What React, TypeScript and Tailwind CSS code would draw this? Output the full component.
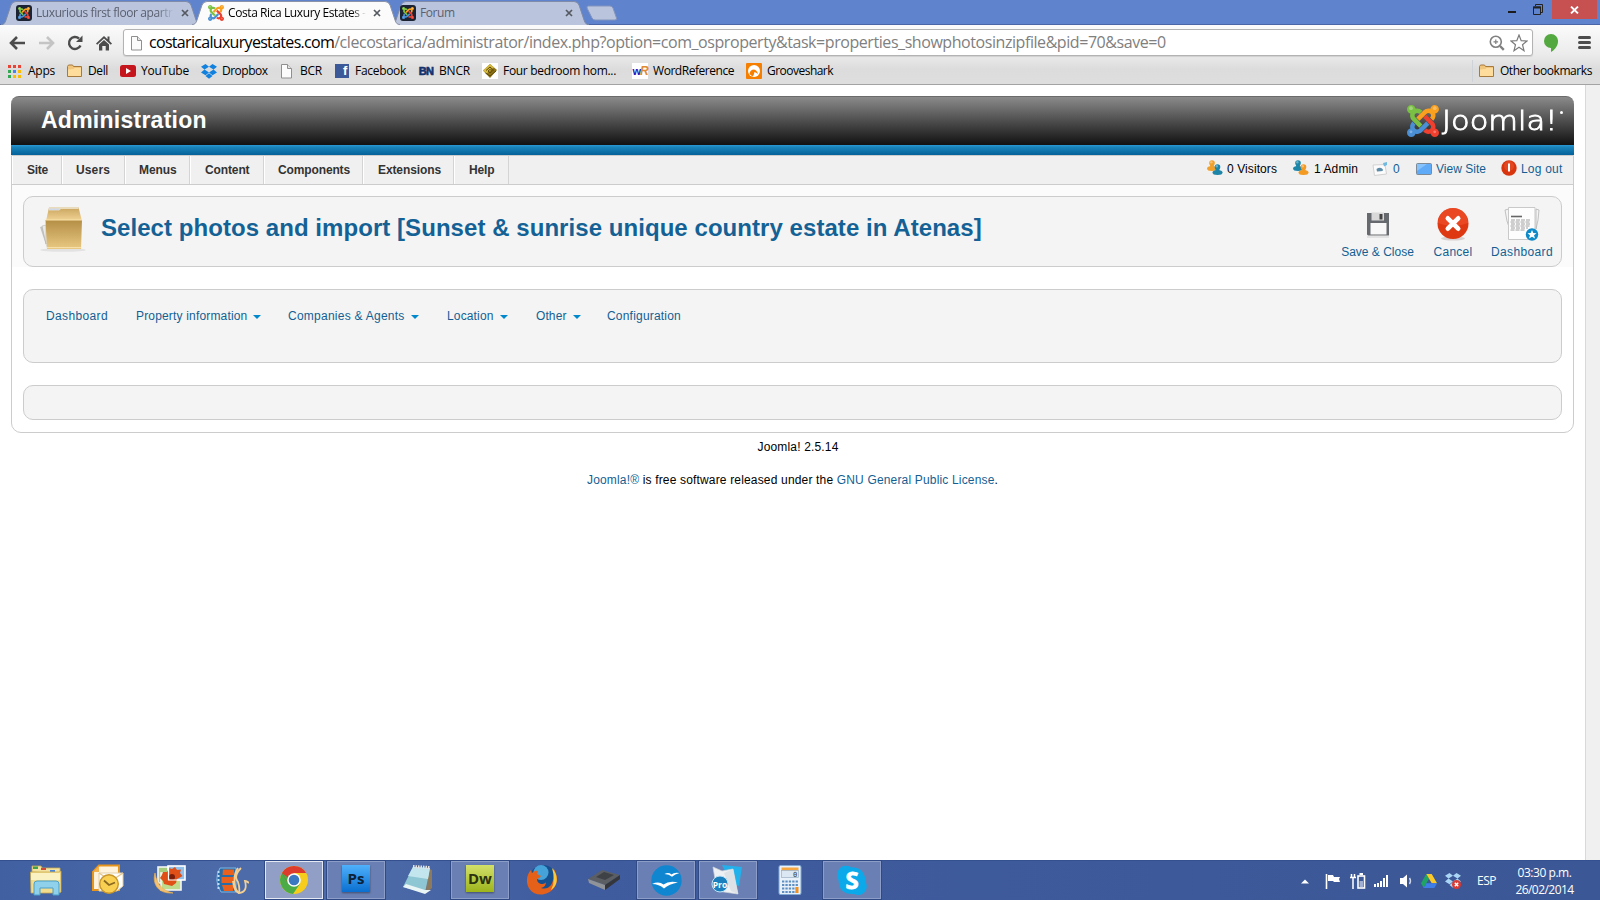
import type { ReactNode } from "react";

type P = { className?: string };

const SVG = "block shrink-0";

/* ---------- Joomla mark ---------- */
function JoomlaMark({ className = "" }: P) {
  return (
    <svg viewBox="0 32 448 448" className={`${SVG} ${className}`}>
      <path fill="#7ac143" d="M.6 92.1C.6 58.8 27.4 32 60.4 32c30 0 54.5 21.9 59.2 50.2 32.6-7.6 67.1.6 96.5 30l-44.3 44.3c-20.5-20.5-42.6-16.3-55.4-3.5-14.3 14.3-14.3 37.9 0 52.2l99.5 99.5-44 44.3c-87.7-87.2-49.7-49.7-99.8-99.7-26.8-26.5-35-64.8-24.8-98.9C20.4 144.6.6 120.7.6 92.1z" />
      <path fill="#f9a01f" d="M130.1 208.5l44.3 44.3c10-10 89.7-89.7 99.7-99.8 14.3-14.3 37.6-14.3 51.9 0 12.8 12.8 17 35-3.5 55.4l44 44.3c31.2-31.2 38.5-67.6 28.9-101.2 29.2-4.1 51.9-29.2 51.9-59.5 0-33.2-26.8-60.1-59.8-60.1-30.3 0-55.4 22.5-59.5 51.6-33.8-9.9-71.7-1.5-98.3 25.1-18.3 19.1-71.1 71.5-99.6 99.9z" />
      <path fill="#ef3f2e" d="M396.4 360.7c8.2-32.7-.9-68.5-26.3-93.9-11.8-12.2 5 4.7-99.5-99.7l-44.3 44.3 99.7 99.7c14.3 14.3 14.3 37.6 0 51.9-12.8 12.8-35 17-55.4-3.5l-44 44.3c27.6 30.2 68 38.8 102.7 28 5.5 27.4 29.7 48.1 58.9 48.1 33 0 59.8-26.8 59.8-60.1 0-30.2-22.5-55-51.6-59.1z" />
      <path fill="#4a8fd3" d="M312.1 307.6l-44-44.3c-87 86.4-50.4 50.4-99.7 99.8-14.3 14.3-37.6 14.3-51.9 0-13.1-13.4-16.9-35.3 3.2-55.4l-44-44.3c-30.2 30.2-38 65.2-29.5 98.3-26.7 6-46.2 29.9-46.2 58.2C0 453.2 26.8 480 59.8 480c28.6 0 52.5-19.8 58.6-46.7 32.7 8.2 68.5-.6 94.2-26 32.1-32 12.2-12.4 99.5-99.7z" />
      <g fill="#fff" opacity=".3">
        <circle cx="56" cy="76" r="26" /><circle cx="388" cy="76" r="26" /><circle cx="388" cy="408" r="20" /><circle cx="56" cy="408" r="20" />
      </g>
    </svg>
  );
}

function JoomlaTile() {
  return (
    <span className="flex size-4 shrink-0 items-center justify-center rounded-[3px] bg-[#1c2433]">
      <JoomlaMark className="size-[12px]" />
    </span>
  );
}

/* ---------- Tabs ---------- */
function TabShape({ w, fill, line }: { w: number; fill: string; line: string }) {
  return (
    <svg width={w} height="25" className="absolute inset-0">
      <path d={`M0 25C3 24.500 4 23 5 20L10 5Q11.500 1.500 15 1.500H${w - 15}Q${w - 11.500} 1.500 ${w - 10} 5L${w - 5} 20C${w - 4} 23 ${w - 3} 24.500 ${w} 25Z`} fill={fill} />
      <path d={`M0 24.500C3 24.500 4 23 5 20L10 5Q11.500 1.500 15 1.500H${w - 15}Q${w - 11.500} 1.500 ${w - 10} 5L${w - 5} 20C${w - 4} 23 ${w - 3} 24.500 ${w} 24.500`} fill="none" stroke={line} />
    </svg>
  );
}

function Cross({ className = "" }: P) {
  return (
    <svg viewBox="0 0 8 8" className={`${SVG} ${className}`}>
      <path d="M1 1L7 7M7 1L1 7" stroke="#555960" strokeWidth="1.7" />
    </svg>
  );
}

function TabStrip() {
  return (
    <div className="flex h-[25px] bg-[#5f83cd] text-[12px] leading-[24px] shadow-[inset_0_-1px_0_#4a66a6]">
      <div className="relative ml-px h-[25px] w-[200px]">
        <TabShape w={200} fill="#bac5dd" line="#7f8ba8" />
        <div className="relative flex h-full items-center pl-[15px]">
          <JoomlaTile />
          <span className="ml-1 w-[138px] overflow-hidden whitespace-nowrap tracking-[-0.41px] text-[#5b6070] [mask-image:linear-gradient(90deg,#000_88%,transparent)]">Luxurious first floor apartr</span>
          <Cross className="ml-[7px] mt-px size-2" />
        </div>
      </div>
      <div className="relative z-10 -ml-[9px] h-[25px] w-[208px]">
        <TabShape w={208} fill="#fbfbfb" line="#8a93a8" />
        <div className="relative flex h-full items-center pl-4">
          <JoomlaMark className="size-4" />
          <span className="ml-1 w-[141px] overflow-hidden whitespace-nowrap tracking-[-0.41px] text-black [mask-image:linear-gradient(90deg,#000_88%,transparent_98%)]">Costa Rica Luxury Estates -</span>
          <Cross className="ml-1 mt-px size-2" />
        </div>
      </div>
      <div className="relative -ml-[9px] h-[25px] w-[198px]">
        <TabShape w={198} fill="#bac5dd" line="#7f8ba8" />
        <div className="relative flex h-full items-center pl-[9px]">
          <JoomlaTile />
          <span className="ml-1 w-[141px] tracking-[-0.45px] text-[#5b6070]">Forum</span>
          <Cross className="ml-1 mt-px size-2" />
        </div>
      </div>
      <svg width="33" height="16" className="ml-[-4px] mt-[5px] block">
        <path d="M3.500 1H25Q27 1 28 3L31.500 13Q32 15 30 15H10Q8 15 7 13L2 3Q1.500 1 3.500 1Z" fill="#bac5dd" stroke="#8494bd" />
      </svg>
      <div className="ml-auto flex h-[25px] items-start">
        <div className="mr-[17px] mt-[11px] h-[2px] w-2 bg-[#1c1c1c]" />
        <svg width="10" height="11" className="mr-[9px] mt-1 block">
          <path d="M2.500 2V.5H9.500V8.500H8" fill="none" stroke="#222" /><path d="M.5 3H7.500V10.500H.5Z" fill="none" stroke="#222" /><path d="M0 3.500H8" stroke="#222" strokeWidth="2" />
        </svg>
        <div className="mr-[3px] flex h-[19px] w-[45px] items-center justify-center bg-[#c75050]">
          <svg width="9" height="8" viewBox="0 0 9 8"><path d="M1 .5L8 7.500M8 .5L1 7.500" stroke="#fff" strokeWidth="1.800" /></svg>
        </div>
      </div>
    </div>
  );
}

/* ---------- Toolbar ---------- */
function PageIcon() {
  return (
    <svg width="16" height="16" viewBox="0 0 16 16" className={SVG}>
      <path d="M2.500 1.500H8.500L12.500 5.500V15H2.500Z" fill="#fbfbfb" stroke="#8f8f8f" /><path d="M8.500 1.500V5.500H12.500" fill="#e4e4e4" stroke="#8f8f8f" />
    </svg>
  );
}

function FolderIcon() {
  return (
    <svg width="16" height="14" viewBox="0 0 16 14" className={SVG}>
      <path d="M.5 12.500V2.500L1.500 1H5.500L6.500 2.500H14.500V12.500Z" fill="#f2c57c" stroke="#a67a3c" />
      <path d="M1 12V5.500L6.500 5L7.500 4H14V12Z" fill="#fddc9c" />
    </svg>
  );
}

function AddressRow() {
  return (
    <div className="flex h-[34px] items-center pt-px">
      <svg width="16" height="14" viewBox="0 0 16 14" className="ml-[9px] block"><path d="M8 1L2 7L8 13M2 7H16" fill="none" stroke="#4c4c4c" strokeWidth="2.600" /></svg>
      <svg width="16" height="14" viewBox="0 0 16 14" className="ml-[14px] block"><path d="M8 1L14 7L8 13M14 7H0" fill="none" stroke="#c4c4c4" strokeWidth="2.600" /></svg>
      <svg width="16" height="16" viewBox="0 0 16 16" className="ml-[12px] block"><path d="M13.500 10.500A6 6 0 1 1 12 3.500" fill="none" stroke="#4c4c4c" strokeWidth="2.400" /><path d="M15.500 .5V7H9Z" fill="#4c4c4c" /></svg>
      <svg width="16" height="16" viewBox="0 0 16 16" className="ml-[13px] block"><path d="M8 1L0 8.500L1.200 9.700L8 3.500L14.800 9.700L16 8.500L13.500 6V1.500H11.500V4.200Z" fill="#4c4c4c" /><path d="M3 9.500L8 5L13 9.500V15.500H9.700V11H6.300V15.500H3Z" fill="#4c4c4c" /></svg>
      <div className="ml-[11px] flex h-[27px] w-[1410px] items-center rounded-[3px] border border-[#b3b3b3] bg-white shadow-[0_1px_1px_#d0d0d0]">
        <span className="ml-[5px]"><PageIcon /></span>
        <span className="mb-px ml-1 whitespace-nowrap text-[16px] leading-[24px] tracking-[-0.69px] text-black">costaricaluxuryestates.com</span>
        <span className="mb-px whitespace-nowrap text-[16px] leading-[24px] tracking-[-0.435px] text-[#808080]">/clecostarica/administrator/index.php?option=com_osproperty&amp;task=properties_showphotosinzipfile&amp;pid=70&amp;save=0</span>
        <svg width="16" height="16" viewBox="0 0 16 16" className="ml-auto block"><circle cx="6.800" cy="6.800" r="5.500" fill="#fff" stroke="#808080" strokeWidth="1.600" /><path d="M6.800 4.500V9.100M4.500 6.800H9.100" stroke="#808080" strokeWidth="1.200" /><path d="M11 11L14.800 14.800" stroke="#808080" strokeWidth="2.400" /></svg>
        <svg width="18" height="18" viewBox="0 0 18 18" className="ml-[5px] mr-1 block"><path d="M9 1L11.200 6.600L17 7L12.500 10.700L14 16.700L9 13.300L4 16.700L5.500 10.700L1 7L6.800 6.600Z" fill="#fff" stroke="#7b7b7b" strokeWidth="1.200" /></svg>
      </div>
      <svg width="14" height="18" viewBox="0 0 14 18" className="ml-[11px] block"><path d="M7 0A7 7 0 0 1 14 7.500C14 12 10.500 16 7 18V14A7 7 0 0 1 7 0Z" fill="#53a93f" /></svg>
      <div className="ml-5 flex flex-col gap-[2px]">
        <div className="h-[3px] w-[13px] rounded-full bg-[#4c4c4c]" /><div className="h-[3px] w-[13px] rounded-full bg-[#4c4c4c]" /><div className="h-[3px] w-[13px] rounded-full bg-[#4c4c4c]" />
      </div>
    </div>
  );
}

const appColors = ["#ea4335", "#ea4335", "#ea4335", "#34a853", "#4285f4", "#fbbc05", "#34a853", "#fbbc05", "#fbbc05"];

function Bookmark({ icon, className, children }: { icon: ReactNode; className: string; children: ReactNode }) {
  return (
    <div className={`flex shrink-0 items-center whitespace-nowrap ${className}`}>
      <span className="mr-[5px] flex w-4 shrink-0 justify-center">{icon}</span>
      <span className="mb-px">{children}</span>
    </div>
  );
}

function BookmarksBar() {
  return (
    <div className="flex h-[24px] items-center pl-[7px] text-[12px] leading-[20px] text-black">
      <Bookmark className="w-[60px] tracking-[-0.25px]" icon={<div className="mr-px grid grid-cols-3 gap-[2px]">{appColors.map((c, i) => <i key={i} className="size-[3px]" style={{ background: c }} />)}</div>}>Apps</Bookmark>
      <Bookmark className="w-[53px] tracking-[-0.38px]" icon={<FolderIcon />}>Dell</Bookmark>
      <Bookmark className="w-[81px] tracking-[-0.19px]" icon={<svg width="16" height="12" viewBox="0 0 16 12"><rect width="16" height="12" rx="2.500" fill="#c4161c" /><path d="M6 3L11 6L6 9Z" fill="#fff" /></svg>}>YouTube</Bookmark>
      <Bookmark className="w-[78px] tracking-[-0.5px]" icon={<svg width="16" height="15" viewBox="0 0 16 15"><path d="M4.500 0L8 2.800L3.500 5.600L0 2.800ZM11.500 0L16 2.800L12.500 5.600L8 2.800ZM0 8.400L3.500 5.600L8 8.400L4.500 11.200ZM12.500 5.600L16 8.400L11.500 11.200L8 8.400ZM4.500 12L8 9.300L11.500 12L8 14.800Z" fill="#1081de" /></svg>}>Dropbox</Bookmark>
      <Bookmark className="w-[55px] tracking-[-0.24px]" icon={<PageIcon />}>BCR</Bookmark>
      <Bookmark className="w-[84px] tracking-[-0.3px]" icon={<span className="flex h-[14px] w-[14px] items-center justify-end bg-[#3b5998] pr-[2px] font-['Liberation_Sans',sans-serif] text-[13px] font-bold leading-[14px] text-white">f</span>}>Facebook</Bookmark>
      <Bookmark className="w-[64px] tracking-[-0.19px]" icon={<span className="font-['Liberation_Sans',sans-serif] text-[11px] font-bold tracking-[-0.6px] text-[#12326e] [-webkit-text-stroke:0.6px_#12326e]">BN</span>}>BNCR</Bookmark>
      <Bookmark className="w-[150px] tracking-[-0.31px]" icon={<svg width="16" height="16" viewBox="0 0 16 16"><rect width="16" height="16" fill="#fff" /><path d="M1 7.500L8 1L15 7L8 15Z" fill="#8f7417" /><path d="M1 7.500L8 1L12 4.500L4.500 10.500Z" fill="#d6bb45" /><path d="M4 7.500L8 4L12 7.500M3.500 10L8 13L14 8M6 8L8.500 6L10.500 8L8 10Z" fill="none" stroke="#5f4a08" /></svg>}>Four bedroom hom...</Bookmark>
      <Bookmark className="w-[114px] tracking-[-0.45px]" icon={<span className="flex size-4 items-center justify-center bg-white font-['Liberation_Sans',sans-serif] text-[11px] font-bold leading-none tracking-[-1px] text-[#1717c4]">w<i className="text-[12px] text-[#e08a33]">R</i></span>}>WordReference</Bookmark>
      <Bookmark className="w-[95px] tracking-[-0.52px]" icon={<svg width="16" height="16" viewBox="0 0 16 16"><rect width="16" height="16" rx="1" fill="#f77f00" /><circle cx="8" cy="8" r="6" fill="#fff" /><path d="M3.500 11Q4 6.500 8 6.500Q11 7 12 11Q10 9.500 8.500 9Q8 12 6.500 13.500Z" fill="#f77f00" /></svg>}>Grooveshark</Bookmark>
      <div className="ml-auto flex h-[22px] items-center border-l border-[#cdd3d8] pl-[6px] pr-2">
        <Bookmark className="tracking-[-0.43px]" icon={<FolderIcon />}>Other bookmarks</Bookmark>
      </div>
    </div>
  );
}

/* ---------- Joomla administrator ---------- */
function Person({ color, x, y }: { color: string; x: number; y: number }) {
  return (
    <g transform={`translate(${x} ${y})`}>
      <ellipse cx="5" cy="8.500" rx="5" ry="2.500" fill={color} />
      <path d="M3 4H7L6.800 9H3.200Z" fill={color} />
      <circle cx="5" cy="3" r="2.800" fill={color} />
      <circle cx="4.300" cy="2.200" r="1.200" fill="#fff" opacity=".35" />
    </g>
  );
}

function Visitors() {
  return (
    <svg width="16" height="16" viewBox="0 0 16 16" className={SVG}>
      <Person color="#f0a02c" x={0} y={0} />
      <Person color="#1d86a8" x={5.5} y={4} />
    </svg>
  );
}

function Admins() {
  return (
    <svg width="16" height="16" viewBox="0 0 16 16" className={SVG}>
      <Person color="#1d86a8" x={0} y={0} />
      <Person color="#f39a22" x={5.5} y={4} />
    </svg>
  );
}

const menu: [string, string][] = [
  ["Site", "w-[50px] pl-[14px] tracking-[-0.25px]"],
  ["Users", "w-[63px] pl-[13px] tracking-[0.13px]"],
  ["Menus", "w-[65px] pl-[13px] tracking-[-0.1px]"],
  ["Content", "w-[74px] pl-[14px] tracking-[-0.12px]"],
  ["Components", "w-[99px] pl-[13px] tracking-[-0.13px]"],
  ["Extensions", "w-[91px] pl-[14px] tracking-[-0.1px]"],
  ["Help", "w-[55px] pl-[14px] tracking-[-0.13px]"],
];

const sub: [string, string, boolean][] = [
  ["Dashboard", "w-[90px] tracking-[0.36px]", false],
  ["Property information", "w-[152px] tracking-[0.17px]", true],
  ["Companies & Agents", "w-[159px] tracking-[0.25px]", true],
  ["Location", "w-[89px] tracking-[0.15px]", true],
  ["Other", "w-[71px] tracking-[0.1px]", true],
  ["Configuration", "w-[90px] tracking-[0.2px]", false],
];

function FolderBox() {
  return (
    <svg width="50" height="48" viewBox="0 0 50 48" className={SVG}>
      <defs>
        <linearGradient id="fb" x1="0" y1="0" x2="0" y2="1"><stop offset="0" stopColor="#b48e45" /><stop offset="1" stopColor="#e9c983" /></linearGradient>
        <linearGradient id="ft" x1="0" y1="0" x2="0" y2="1"><stop offset="0" stopColor="#c9a45f" /><stop offset="1" stopColor="#f3d596" /></linearGradient>
      </defs>
      <ellipse cx="24" cy="44" rx="23" ry="1.800" fill="#e2e2e2" />
      <path d="M1 21L5 20L8 42Z" fill="#c4c4c4" /><path d="M3 20L7 19V38Z" fill="#e9e9e9" stroke="#aaa" strokeWidth=".5" />
      <path d="M10 1.500H39.500L43 15H7Z" fill="url(#ft)" /><path d="M10 1H39.500V3H22L20 4.500H10Z" fill="#e8dcbc" /><rect x="11" y="2.500" width="9" height="1.600" fill="#cfd8e8" />
      <path d="M6.500 14H43L42 43H8Z" fill="url(#fb)" /><path d="M6.500 14H43" stroke="#fbe3ab" /><path d="M8 41.500H42" stroke="#f6dfa8" />
    </svg>
  );
}

function AdminPage() {
  return (
    <div className="mx-[11px] mt-[11px] w-[1563px] shrink-0 font-['Liberation_Sans',sans-serif] text-[12px] text-black">
      <header className="flex h-[49px] items-center justify-between rounded-t-[8px] border-t border-[#6b6b6b] bg-[linear-gradient(#8a8a8a,#6c6c6c_25%,#111)] pl-[30px] pr-[11px]">
        <h1 className="mb-[2px] text-[23px] font-bold leading-[30px] tracking-[0.25px] text-white">Administration</h1>
        <div className="flex items-center">
          <JoomlaMark className="h-8 w-8" />
          <span className="ml-[3px] flex w-[118px] items-center">
            <span className="origin-left scale-x-[1.13] whitespace-nowrap font-['DejaVu_Sans',sans-serif] text-[27px] font-extralight leading-[30px] text-white [-webkit-text-stroke:0.9px_#fff]">Joomla!</span>
          </span>
          <span className="mb-[18px] size-[3px] rounded-full bg-white" />
        </div>
      </header>
      <div className="h-[10px] bg-[linear-gradient(#2a9ad6,#1a84bb_20%,#036299)]" />
      <div className="h-[278px] rounded-b-[10px] border border-[#ccc] bg-white">
        <div className="flex h-[29px] items-center border-b border-[#ccc] bg-[#f0f0f0]">
          <nav className="flex h-full font-bold text-[#333]">
            {menu.map(([t, c]) => (
              <div key={t} className={`flex h-full items-center whitespace-nowrap border-l border-l-white border-r border-r-[#d4d4d4] ${c}`}>{t}</div>
            ))}
          </nav>
          <div className="ml-auto flex h-full items-center whitespace-nowrap pb-[2px] pr-[9px]">
            <span className="mb-[2px]"><Visitors /></span><span className="ml-1 w-[66px] tracking-[0.09px]">0 Visitors</span>
            <span className="mb-[2px]"><Admins /></span><span className="ml-[5px] w-[58px] tracking-[0.09px]">1 Admin</span>
            <svg width="16" height="16" viewBox="0 0 16 16" className={SVG}><path d="M1 4L13 3.500L14.500 13L2.500 14.500Z" fill="#fbfbfb" stroke="#d2d2d2" /><path d="M4.500 8Q8 5.500 10.500 8T5 10.500Z" fill="#5d8ca8" /><path d="M11 2L15 1V4L12 5.500Z" fill="#6fb8e0" /></svg>
            <span className="ml-[5px] w-[23px] text-[#135f93]">0</span>
            <svg width="16" height="12" viewBox="0 0 16 12" className={SVG}><rect x=".5" y=".5" width="15" height="11" rx="1" fill="#5fabf8" stroke="#7d8a98" /><path d="M1 8L11 1H1Z" fill="#86c2fb" /></svg>
            <span className="ml-[4px] w-[65px] tracking-[0.02px] text-[#135f93]">View Site</span>
            <svg width="16" height="16" viewBox="0 0 16 16" className="mb-[2px] block shrink-0"><circle cx="8" cy="8" r="7.700" fill="#d8350f" /><circle cx="8" cy="6" r="5" fill="#ee5a34" opacity=".5" /><rect x="7" y="3.500" width="2" height="8" fill="#fff" /></svg>
            <span className="ml-1 w-[43px] tracking-[0.2px] text-[#135f93]">Log out</span>
          </div>
        </div>
        <div className="h-[82px] bg-[#fbfbfb] px-[11px] pt-[11px]">
          <section className="flex h-[71px] items-start rounded-[10px] border border-[#ccc] bg-[#f4f4f4]">
            <div className="ml-[15px] mt-[9px]"><FolderBox /></div>
            <h2 className="ml-[12px] mt-[16px] whitespace-nowrap text-[24px] font-bold leading-[30px] tracking-[0.055px] text-[#146295]">Select photos and import [Sunset &amp; sunrise unique country estate in Atenas]</h2>
            <div className="ml-auto mr-[7px] mt-[10px] flex leading-[16px] text-[#135f93]">
              <div className="flex w-[73px] flex-col items-center whitespace-nowrap">
                <svg width="32" height="32" viewBox="0 0 32 32"><path d="M5 6H27V28.500H6L5 27.500Z" fill="#666a6e" /><path d="M9.500 5.500H22V13.500H9.500Z" fill="#d9d9d9" /><path d="M17.500 7H20.500V12.500H17.500Z" fill="#444" /><path d="M8.500 16H24.500V27.500H8.500Z" fill="#f8f8f8" /><path d="M5 30H27" stroke="#ccc" strokeWidth="1.500" opacity=".6" /></svg>
                <span className="mt-[5px]">Save &amp; Close</span>
              </div>
              <div className="ml-[19px] flex w-[40px] flex-col items-center whitespace-nowrap">
                <svg width="34" height="34" viewBox="0 0 34 34" className="-mb-[2px]"><ellipse cx="17" cy="31.500" rx="12" ry="2" fill="#d8d0d0" /><circle cx="17" cy="16.500" r="15.500" fill="#de3812" /><path d="M2 16A15 15 0 0 1 32 16Q17 22 2 16Z" fill="#f0532e" opacity=".6" /><path d="M11.800 11.300L22.200 21.700M22.200 11.300L11.800 21.700" stroke="#fff" strokeWidth="4.600" strokeLinecap="round" /></svg>
                <span className="mt-[5px] tracking-[0.27px]">Cancel</span>
              </div>
              <div className="ml-[17px] flex w-[64px] flex-col items-center whitespace-nowrap">
                <svg width="38" height="34" viewBox="0 0 38 34" className="-mb-[2px]"><path d="M2 3L6 2V20L4 14ZM36 3L33 2V22L35 13Z" fill="#f4f4f4" stroke="#aaa" strokeWidth=".7" /><path d="M5.500 .5H32V32.500H5.500Z" fill="#fdfdfd" stroke="#c9c9c9" /><path d="M8 9.500H19" stroke="#666" strokeWidth="1.600" /><path d="M8 13H28M7.500 15H27M8 17H28M7.500 19H27M8 21H25M7.500 23H22" stroke="#a0a0a0" strokeWidth="1" strokeDasharray="4 1" /><circle cx="29" cy="27.500" r="6.200" fill="#0e8ac8" /><path d="M29 23L30.300 26L33.500 26.200L31 28.300L32 31.500L29 29.700L26 31.500L27 28.300L24.500 26.200L27.700 26Z" fill="#fff" /></svg>
                <span className="mt-[5px] tracking-[0.36px]">Dashboard</span>
              </div>
            </div>
          </section>
        </div>
        <section className="mx-[11px] mt-[22px] flex h-[74px] items-start rounded-[10px] border border-[#ccc] bg-[#f4f4f4] pl-[22px] pt-[17px] leading-[18px] text-[#135f93]">
          {sub.map(([t, c, caret]) => (
            <div key={t} className={`flex items-center whitespace-nowrap ${c}`}>
              {t}
              {caret && <span className="ml-[6px] mt-px border-x-4 border-t-4 border-x-transparent border-t-[#0088cc]" />}
            </div>
          ))}
        </section>
        <section className="mx-[11px] mt-[22px] h-[35px] rounded-[10px] border border-[#ccc] bg-[#f4f4f4]" />
      </div>
      <footer className="w-[1563px] text-center">
        <p className="mt-[5px] pl-[11px] leading-[18px] tracking-[0.16px]">Joomla! 2.5.14</p>
        <p className="mt-[15px] leading-[18px] tracking-[0.166px]"><a className="text-[#135f93]">Joomla!®</a> is free software released under the <a className="text-[#135f93]">GNU General Public License</a>.</p>
      </footer>
    </div>
  );
}

/* ---------- Taskbar ---------- */
function Explorer() {
  return (
    <svg width="34" height="32" viewBox="0 0 34 32"><path d="M3 8V2H12L13 4H31V10Z" fill="#f3e3a0" stroke="#c9a94e" strokeWidth=".8" /><path d="M4 2.500H9V5H4Z" fill="#3fa24a" /><path d="M12 4H17V6H12Z" fill="#d04a3a" /><path d="M21 6H26V8H21Z" fill="#4c86d8" /><path d="M1.500 8H30L32 7V28L30 29H2Z" fill="#f2dd8e" stroke="#c9a94e" strokeWidth=".8" /><path d="M2 9H31V16H2Z" fill="#fbf2c4" /><path d="M5 31V20Q5 17 8 17H27Q30 17 30 20V31H24V24H11V31Z" fill="#8fd0ea" stroke="#4ba0cb" /></svg>
  );
}
function Outlook() {
  return (
    <svg width="34" height="32" viewBox="0 0 34 32"><path d="M2 26V8L8 1.500H28V26Z" fill="#fff3dc" stroke="#e8951c" strokeWidth="2" /><path d="M8 2V8H2Z" fill="#f4b24c" /><path d="M8 9H32V22L26 27H8Z" fill="#fff" stroke="#e0cfa8" /><path d="M8 9L20 17L32 9" fill="none" stroke="#e3c48a" strokeWidth="1.200" /><circle cx="18" cy="20" r="9.300" fill="#f9d052" stroke="#c9962a" strokeWidth="1.400" /><path d="M13 16.500L18 21L24 18.500" fill="none" stroke="#8a6a22" strokeWidth="1.800" /></svg>
  );
}
function Photos() {
  return (
    <svg width="34" height="32" viewBox="0 0 34 32"><rect x="5" y="3" width="17" height="16" fill="#a5cd7e" stroke="#f4f4f4" strokeWidth="1.600" /><rect x="8" y="9" width="20" height="17" fill="#bfdc8e" stroke="#f4f4f4" strokeWidth="1.600" /><rect x="15" y="2" width="17" height="14" fill="#8fc1ec" stroke="#fff" strokeWidth="1.600" /><path d="M16 4L19 5L22 3L24 6L28 5.500L27 9L29.500 12L26 14L24 15L23 19L19 22L15 21L11 20L10 17L7 14L9 11L10 8L14 8Z" fill="#df4f16" /><circle cx="19" cy="13" r="3" fill="#7c1d08" /><path d="M15.500 3V16H24" fill="none" stroke="#fff" strokeWidth="1.200" /><path d="M2 9C-1 20 5 30 20 29C11 27 4 22 2 9Z" fill="#f5c273" stroke="#e9b04e" strokeWidth=".7" /></svg>
  );
}
function Movie() {
  return (
    <svg width="34" height="32" viewBox="0 0 34 32"><path d="M5 4H21V28H6Q-2 16 5 4Z" fill="#2a6ca8" stroke="#7fb6e2" /><path d="M8 5.500H19V11H7.500ZM6.500 13H18V19H6.500ZM7 21H18V27H9Z" fill="#e9611c" /><path d="M3.500 7V26" stroke="#bfe0f7" strokeWidth="2" strokeDasharray="2 2" /><path d="M23 4C17 12 19 28 25 29Q19 29 18 17M26 4Q18 12 23 18Q25 24 24 29Q33 28 30 17Q32 17 34 19" fill="none" stroke="#f3cf93" strokeWidth="1.800" /></svg>
  );
}
function Chrome() {
  return (
    <svg width="30" height="30" viewBox="0 0 30 30"><circle cx="15" cy="15" r="14" fill="#f7cd1d" /><path d="M2.900 8A14 14 0 0 0 14 29L21.200 18.500L15 15V8Z" fill="#4aab47" /><path d="M2.900 8A14 14 0 0 1 27.200 8H15L9 12L9 18.500Z" fill="#dd3b2c" /><path d="M2.900 8L9.500 19L11 14Z" fill="#4aab47" /><circle cx="15" cy="15" r="6.800" fill="#fff" /><circle cx="15" cy="15" r="5.300" fill="#3a78c2" /></svg>
  );
}
function Notepad() {
  return (
    <svg width="34" height="32" viewBox="0 0 34 32"><path d="M26 4L31 6L31 24L25 29Z" fill="#8d7a5c" /><path d="M12 3L29 4L24 29L2 23Z" fill="#8fc6d4" /><path d="M12 3L29 4L27 15L7 12Z" fill="#c3e6ee" /><path d="M2 23L5 20L24 26L30 26L24 30Z" fill="#e9f4f5" /><path d="M12 2.500L29 3.500" stroke="#e5e5e5" strokeWidth="3" strokeDasharray="1.500 1" /></svg>
  );
}
function Firefox() {
  return (
    <svg width="32" height="32" viewBox="0 0 32 32"><circle cx="17" cy="14.500" r="13.500" fill="#16508f" /><circle cx="15" cy="8.500" r="7.500" fill="#4fb2e6" opacity=".85" /><path d="M27 4C31 9 33 17 28 24C22 32 9 33 3.500 25C-1 18 1 10 5 6L6 9Q9 6 12 7L11 10L15 12Q14 14 11 15Q11 19 15 20Q19 20 20 18Q20 23 15 24Q21 26 25 21Q29 15 27 4Z" fill="#e5611a" /><path d="M26 4C33 11 32 22 25 26Q30 17 26 4Z" fill="#f9cb3c" /></svg>
  );
}
function Scanner() {
  return (
    <svg width="34" height="24" viewBox="0 0 34 24"><path d="M1 11L15 2L33 7L18 17Z" fill="#5b5e63" /><path d="M9 9L17 4L27 7L18 12Z" fill="#3e4145" /><path d="M1 11L18 17V22L2 15Z" fill="#909398" /><path d="M18 17L33 7V11L18 22Z" fill="#34363a" /></svg>
  );
}
function OpenOffice() {
  return (
    <svg width="31" height="31" viewBox="0 0 31 31"><circle cx="15.500" cy="15.500" r="15.200" fill="#1186d0" /><path d="M13.500 9Q17.500 7 20.500 9.500Q23 7 28.500 8Q24 9 21 11.800Q18 9 13.500 9ZM1 19Q8 16 12.500 19.500Q18 15.500 27 17.500Q18 19 13 23.500Q8 19 1 19Z" fill="#fff" /></svg>
  );
}
function ProFolder() {
  return (
    <svg width="34" height="32" viewBox="0 0 34 32"><path d="M11 1L31 3L28 22L20 20Z" fill="#22b1ea" /><path d="M2 3L11 7L22 5L27 30L6 27Z" fill="#eef1f4" stroke="#cfd4da" strokeWidth=".7" /><path d="M13 9L22 5L27 30L20 27Z" fill="#dde2e7" /><circle cx="9" cy="20" r="8" fill="#1a80bd" stroke="#bfe3f5" /><text x="9" y="23.500" textAnchor="middle" fontSize="8.500" fontWeight="bold" fill="#fff" fontFamily="Open Sans">Pro</text></svg>
  );
}
function Calc() {
  return (
    <svg width="24" height="30" viewBox="0 0 24 30"><rect x="1" y=".5" width="22" height="29" rx="1.500" fill="#e8f1fa" stroke="#7fa9d4" /><rect x="3.500" y="2.500" width="17" height="3" fill="#f4a640" /><rect x="3.500" y="5.500" width="17" height="7" fill="#dbe8f3" stroke="#8fa6bd" strokeWidth=".6" /><text x="17" y="11.500" fontSize="7" fontFamily="DejaVu Sans Mono" fill="#333" textAnchor="middle">0</text><path d="M4 16.500H20M4 20H20M4 23.500H20M4 27H20" stroke="#5e8ec2" strokeWidth="2.200" strokeDasharray="2.300 1.100" /><rect x="17.500" y="22" width="3" height="6" fill="#f09020" /></svg>
  );
}
function Skype() {
  return (
    <svg width="32" height="31" viewBox="0 0 32 31"><path d="M9 .8Q13 .8 15 2.200Q29 2 29.500 17Q32 21 29.500 26Q25 32 18 29Q3 30 2.500 15Q-.5 8 3.500 3.500Q6 1 9 .8Z" fill="#0ba9ea" /><text x="16" y="24" textAnchor="middle" fontSize="24" fontWeight="bold" fill="#fff" stroke="#fff" strokeWidth=".8" fontFamily="Open Sans">S</text></svg>
  );
}
function Tile({ className, children }: { className: string; children: string }) {
  return <span className={`mb-[4px] flex h-[27px] w-[28px] items-center justify-center text-[15px] font-bold shadow-[0_1px_2px_#0006] ${className}`}>{children}</span>;
}

const RUN = "border-[#8c9dc8] bg-[#6a80b4] outline outline-[#2f4a84]";
const IDLE = "border-transparent";
const tasks: [ReactNode, string][] = [
  [<Explorer />, IDLE],
  [<Outlook />, IDLE],
  [<Photos />, IDLE],
  [<Movie />, IDLE],
  [<Chrome />, "border-[#e4e9f4] bg-[#919fc6] outline outline-[#2f4a84]"],
  [<Tile className="bg-[linear-gradient(#4fb0fb,#0a6fd0)] text-[#0d2238]">Ps</Tile>, RUN],
  [<Notepad />, IDLE],
  [<Tile className="bg-[linear-gradient(#d3e06a,#9db41c)] text-[#2c3210]">Dw</Tile>, RUN],
  [<Firefox />, IDLE],
  [<Scanner />, IDLE],
  [<OpenOffice />, RUN],
  [<ProFolder />, RUN],
  [<Calc />, IDLE],
  [<Skype />, RUN],
];

function Taskbar() {
  return (
    <footer className="flex h-10 items-stretch border-t border-[#35508e] bg-[#3f5c9f] bg-[linear-gradient(90deg,#4060a2,#4d6ba8_15%,#4d6ba8_22%,#3f5c9f_35%,#3c5795)]">
      <div className="ml-[17px] flex items-stretch gap-1 pb-px">
        {tasks.map(([icon, c], i) => (
          <div key={i} className={`flex w-[58px] items-center justify-center border ${c}`}>{icon}</div>
        ))}
      </div>
      <div className="ml-auto flex items-center text-white">
        <svg width="8" height="5" viewBox="0 0 8 5" className="mr-[16px] mt-[2px]"><path d="M0 4.500L4 .5L8 4.500Z" fill="#fff" /></svg>
        <svg width="16" height="16" viewBox="0 0 16 16" className="mr-[9px]"><path d="M1.500 1V16" stroke="#fff" strokeWidth="1.600" /><path d="M3 2H8L9 4H15L14 6L15 9H9L8 8H3Z" fill="#fff" /></svg>
        <svg width="16" height="16" viewBox="0 0 16 16" className="mr-[7px]"><path d="M1.500 1V4M4.500 1V4M0 4.500H6M3 4V16" stroke="#fff" strokeWidth="1.500" /><rect x="8" y="3" width="6.500" height="12" fill="none" stroke="#fff" strokeWidth="1.600" /><rect x="9.500" y="0" width="3.500" height="2" fill="#fff" /><path d="M9.500 8H13V14H9.500Z" fill="#9fb0d4" /></svg>
        <svg width="16" height="14" viewBox="0 0 16 14" className="mr-[10px]"><path d="M1 10H3V13H1ZM4 9H6V13H4ZM7 7H9V13H7ZM10 4H12V13H10ZM13 1H15V13H13Z" fill="#fff" /></svg>
        <svg width="14" height="16" viewBox="0 0 14 16" className="mr-[8px]"><path d="M1 5H4L8 1.500V14.500L4 11H1Z" fill="#fff" /><path d="M10.500 5Q12.500 8 10.500 11" fill="none" stroke="#cfd8ea" strokeWidth="1.400" /></svg>
        <svg width="16" height="14" viewBox="0 0 16 14" className="mr-[8px]"><path d="M5.300 0L0 9.300L2.700 14L8 4.700Z" fill="#1fa463" /><path d="M5.300 0H10.700L16 9.300H10.700Z" fill="#fbc928" /><path d="M5.300 9.300H16L13.300 14H2.700Z" fill="#3f7ee8" /></svg>
        <svg width="16" height="16" viewBox="0 0 16 16" className="mr-4"><path d="M4.500 0L8 2.800L3.500 5.600L0 2.800ZM11.500 0L16 2.800L12.500 5.600L8 2.800ZM0 8.400L3.500 5.600L8 8.400L4.500 11.200ZM12.500 5.600L16 8.400L11.500 11.200L8 8.400ZM4.500 12L8 9.300L11.500 12L8 14.800Z" fill="#a9d6f5" /><circle cx="11.500" cy="11.500" r="4.500" fill="#d83a34" /><path d="M9.800 9.800L13.200 13.200M13.200 9.800L9.800 13.200" stroke="#fff" strokeWidth="1.400" /></svg>
        <span className="w-[38px] text-[12px] tracking-[-0.49px]">ESP</span>
        <div className="mr-[26px] w-[59px] text-center text-[12px] leading-[17px] tracking-[-0.55px]">
          <div className="tracking-[-0.45px]">03:30 p.m.</div>
          <div>26/02/2014</div>
        </div>
      </div>
    </footer>
  );
}

export default function App() {
  return (
    <div className="flex h-[900px] w-[1600px] flex-col overflow-hidden bg-white font-['Open_Sans',sans-serif]">
      <TabStrip />
      <div className="h-[60px] border-b border-[#a3a3a3] bg-[linear-gradient(#fbfbfb,#ebebeb_50%,#dcdcdc_75%,#dedede)]">
        <AddressRow />
        <BookmarksBar />
      </div>
      <div className="flex min-h-0 flex-1">
        <main className="min-w-0 flex-1 bg-white"><AdminPage /></main>
        <div className="w-[15px] border-l border-[#d9d9d9] bg-[#f0f0f0]" />
      </div>
      <Taskbar />
    </div>
  );
}
